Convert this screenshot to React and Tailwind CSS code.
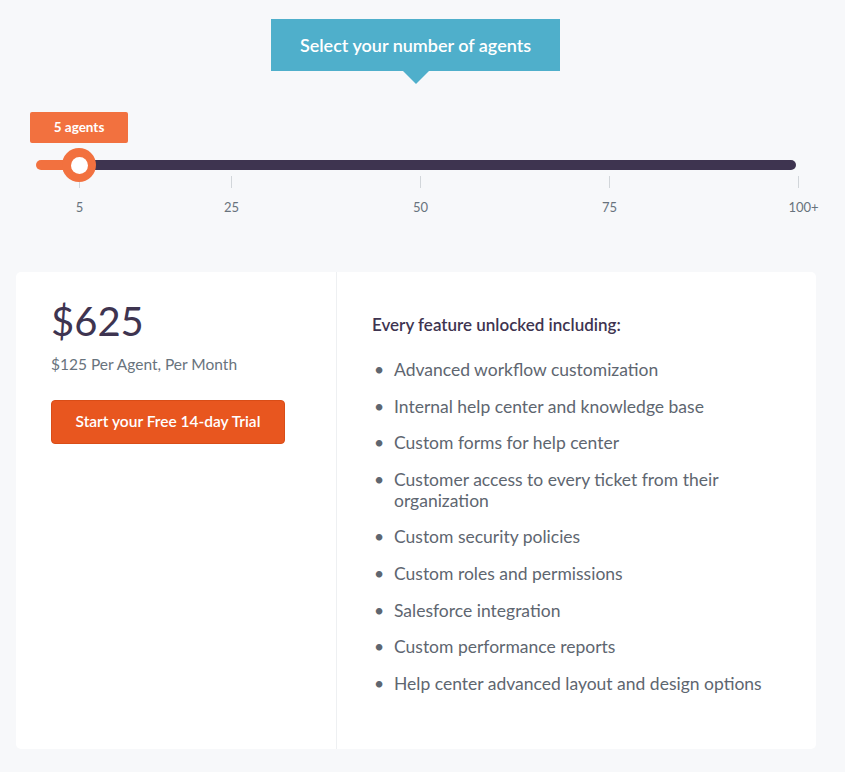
const FEATURES = [
  'Advanced workflow customization',
  'Internal help center and knowledge base',
  'Custom forms for help center',
  'Customer access to every ticket from their organization',
  'Custom security policies',
  'Custom roles and permissions',
  'Salesforce integration',
  'Custom performance reports',
  'Help center advanced layout and design options',
]

// spacing classes written out in full so Tailwind picks them up
const TICKS = [
  { label: '5',    gap: 'ml-[79px]' },
  { label: '25',   gap: 'ml-[151px]' },
  { label: '50',   gap: 'ml-[188px]' },
  { label: '75',   gap: 'ml-[188px]' },
  { label: '100+', gap: 'ml-[188px]', nudge: 'translate-x-[5px]' },
]

export default function App() {
  return (
    <div className="min-h-[772px] bg-[#f7f8fa] font-['Lato',sans-serif] pt-[19px] pb-[23px]">
      {/* ── Tooltip ── */}
      <div className="ml-[271px] w-[289px] flex flex-col items-center">
        <div className="w-full h-[52px] bg-[#4fafcb] text-white text-[18px] font-semibold flex items-center justify-center">
          Select your number of agents
        </div>
        <div className="w-0 h-0 border-l-[13px] border-r-[13px] border-t-[13px] border-l-transparent border-r-transparent border-t-[#4fafcb]" />
      </div>

      {/* ── Slider ── */}
      <div className="mt-[28px]">
        <div className="ml-[30px] w-[98px] h-[31px] rounded-[2px] bg-[#f2713f] text-white text-[13.5px] font-bold flex items-center justify-center">
          5 agents
        </div>

        <div className="relative ml-[36px] mt-[17px] w-[760px] h-[10px] flex">
          <div className="w-[44px] rounded-l-full bg-[#f2713f]" />
          <div className="flex-1 rounded-r-full bg-[#3e3450]" />
          <div className="absolute left-[26px] -top-[12px] w-[34px] h-[34px] rounded-full bg-[#f2713f] flex items-center justify-center">
            <div className="w-[17px] h-[17px] rounded-full bg-white" />
          </div>
        </div>

        <div className="mt-[6px] flex">
          {TICKS.map(t => (
            <div key={t.label} className={`${t.gap} w-px flex flex-col items-center`}>
              <div className="w-px h-[12px] bg-[#d2d6da]" />
              <div className={`mt-[10px] text-[13px] text-[#68737d] whitespace-nowrap ${t.nudge || ''}`}>{t.label}</div>
            </div>
          ))}
        </div>
      </div>

      {/* ── Pricing card ── */}
      <div className="mt-[54px] mx-[16px] w-[800px] h-[477px] bg-white rounded-[5px] flex">
        <div className="w-[321px] border-r border-[#eef0f2] pl-[35px] pt-[25px]">
          <div className="text-[40px] leading-[48px] text-[#3e3450]">$625</div>
          <div className="mt-[8px] text-[15.5px] text-[#68737d]">$125 Per Agent, Per Month</div>
          <button className="mt-[24px] w-[234px] h-[44px] rounded-[4px] bg-[#e8561f] border border-[#d94d17] text-white text-[15.5px] font-semibold">
            Start your Free 14-day Trial
          </button>
        </div>
        <div className="flex-1 pl-[35px] pt-[40px] pr-[40px]">
          <div className="text-[17px] font-semibold text-[#3e3450]">Every feature unlocked including:</div>
          <ul className="mt-[22px] flex flex-col gap-[15.6px]">
            {FEATURES.map(f => (
              <li key={f} className="flex text-[17.5px] leading-[21px] text-[#5e6670]">
                <span className="w-[22px] shrink-0 pl-[2px]">•</span>
                <span className="max-w-[380px]">{f}</span>
              </li>
            ))}
          </ul>
        </div>
      </div>
    </div>
  )
}
